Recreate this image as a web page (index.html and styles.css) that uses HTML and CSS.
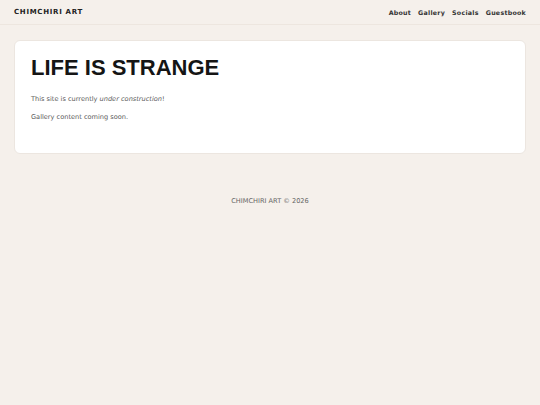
FILE: index.html
```html
<!DOCTYPE html>
<html lang="en">
<head>
    <meta charset="UTF-8">
    <meta name="viewport" content="width=device-width, initial-scale=1.0">
    <title>Chimchiri Art</title>
    <link rel="stylesheet" href="styles.css">
</head>
<body>
    <header class="site-header">
        <a class="logo" href="#">CHIMCHIRI ART</a>
        <nav class="nav">
            <a href="#">About</a>
            <a href="#">Gallery</a>
            <a href="#">Socials</a>
            <a href="#">Guestbook</a>
        </nav>
    </header>

    <main class="page">
        <section class="card">
            <h1>LIFE IS STRANGE</h1>
            <p>This site is currently <em>under construction</em>!</p>
            <p>Gallery content coming soon.</p>
        </section>
    </main>

    <footer class="site-footer">CHIMCHIRI ART &copy; 2026</footer>
</body>
</html>
```

FILE: styles.css
```css
body {
    font-family: 'DejaVu Sans', 'Noto Sans', sans-serif;
    background: #f5f0eb;
    color: #1a1a1a;
    margin: 0;
}

a {
    color: inherit;
    text-decoration: none;
}

.site-header {
    display: flex;
    justify-content: space-between;
    align-items: center;
    height: 24px;
    padding: 0 14px;
    border-bottom: 1px solid #ede6df;
}

.logo {
    font-size: 7px;
    font-weight: bold;
    letter-spacing: 0.7px;
    color: #222;
}

.nav {
    display: flex;
    gap: 7px;
}

.nav a {
    font-size: 6.3px;
    font-weight: 600;
    letter-spacing: 0.25px;
    color: #333;
}

.page {
    padding: 15px 14px 0;
}

.card {
    background: white;
    border: 1px solid #ece6e0;
    border-radius: 6px;
    padding: 16px 16px 30px;
}

h1 {
    font-family: 'Liberation Sans', Arial, sans-serif;
    font-size: 22px;
    line-height: 1;
    font-weight: bold;
    margin: 0 0 14px;
    color: #151515;
}

.card p {
    font-size: 6.6px;
    line-height: 12px;
    color: #5a5a5a;
    margin: 0 0 6px;
}

.card p:last-child {
    margin-bottom: 0;
}

.site-footer {
    text-align: center;
    font-size: 6.6px;
    line-height: 12px;
    color: #666;
    padding-top: 41px;
}
```
